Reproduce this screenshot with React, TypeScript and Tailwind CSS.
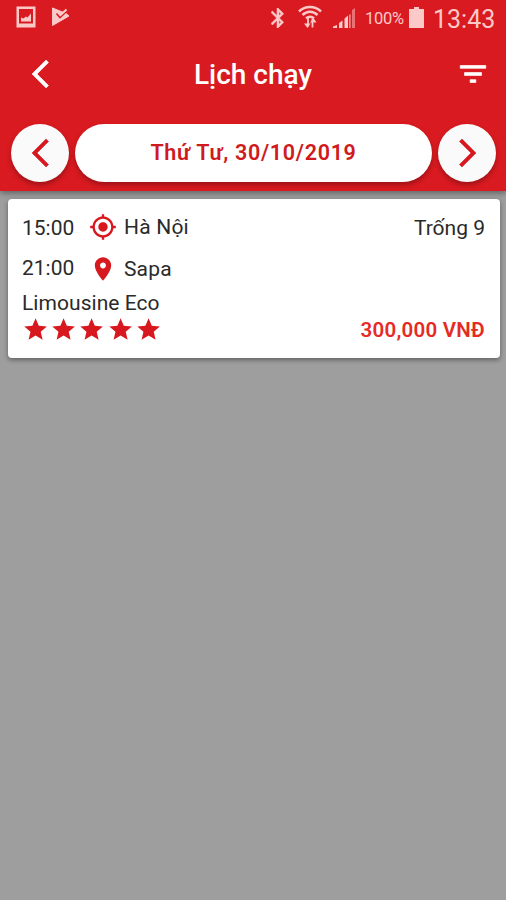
import type { ReactNode } from 'react';

interface IconProps {
  d: string;
  className?: string;
  viewBox?: string;
}

const icons = {
  back: 'M11.67 3.87L9.9 2.1 0 12l9.9 9.9 1.77-1.77L3.54 12z',
  forward: 'M.33 3.87L2.1 2.1 12 12l-9.9 9.9-1.77-1.77L8.46 12z',
  filter: 'M10 18h4v-2h-4v2zM3 6v2h18V6H3zm3 7h12v-2H6v2z',
  origin:
    'M12 8c-2.21 0-4 1.79-4 4s1.79 4 4 4 4-1.79 4-4-1.79-4-4-4zm8.94 3c-.46-4.17-3.77-7.48-7.94-7.94V1h-2v2.06C6.83 3.52 3.52 6.83 3.06 11H1v2h2.06c.46 4.17 3.77 7.48 7.94 7.94V23h2v-2.06c4.17-.46 7.48-3.77 7.94-7.94H23v-2h-2.06zM12 19c-3.87 0-7-3.13-7-7s3.13-7 7-7 7 3.13 7 7-3.13 7-7 7z',
  place:
    'M12 2C8.13 2 5 5.13 5 9c0 5.25 7 13 7 13s7-7.75 7-13c0-3.87-3.13-7-7-7zm0 9.5c-1.38 0-2.5-1.12-2.5-2.5s1.12-2.5 2.5-2.5 2.5 1.12 2.5 2.5-1.12 2.5-2.5 2.5z',
  star: 'M12 17.27L18.18 21l-1.64-7.03L22 9.24l-7.19-.61L12 2 9.19 8.63 2 9.24l5.46 4.73L5.82 21z',
  bluetooth:
    'M17.71 7.71L12 2h-1v7.59L6.41 5 5 6.41 10.59 12 5 17.59 6.41 19 11 14.41V22h1l5.71-5.71-4.3-4.29 4.3-4.29zM13 5.83l1.88 1.88L13 9.59V5.83zm1.88 10.46L13 18.17v-3.76l1.88 1.88z',
};

function Icon({ d, className, viewBox = '0 0 24 24' }: IconProps) {
  return (
    <svg viewBox={viewBox} fill="currentColor" className={className} aria-hidden="true">
      <path d={d} />
    </svg>
  );
}

function Chevron({ d }: { d: string }) {
  return (
    <svg viewBox="0 0 12 24" fill="currentColor" stroke="currentColor" strokeWidth="0.4" className="h-[34px] w-[17px]" aria-hidden="true">
      <path d={d} />
    </svg>
  );
}

function StatusBar() {
  return (
    <div className="flex h-9 items-center text-[#fcc9c9]">
      <svg viewBox="0 0 20 22" className="-mt-0.5 ml-4 h-[22px] w-5 shrink-0">
        <path fill="currentColor" fillRule="evenodd" d="M.5.5h19v21H.5zM3 3v14.500h14V3z" />
        <path fill="currentColor" d="M5 15.500v-4l2.500 1 2.500-2 1.500 1 3.500-4v8z" />
      </svg>
      <svg viewBox="0 0 20 20" className="-mt-0.5 ml-[15px] h-5 w-5 shrink-0">
        <path fill="currentColor" stroke="currentColor" strokeLinejoin="round" d="M1.500 1v17.500L18 9l-3-2.500z" />
        <path fill="currentColor" d="M1 .5L9 5 7 9z" />
        <path fill="none" stroke="#d91a20" strokeWidth="1.600" d="M5.500 6.500l3.500 4 8-7.500" />
        <path fill="none" stroke="currentColor" strokeWidth="2.200" d="M7.500 5.500l2 2.500 6-5.500" />
      </svg>
      <svg viewBox="5 2 13 20" className="ml-[200px] h-5 w-[13px] shrink-0" fill="currentColor" stroke="currentColor" strokeWidth=".5">
        <path d={icons.bluetooth} />
      </svg>
      <svg viewBox="0 0 24 24" className="-mt-1 ml-[14px] h-6 w-6 shrink-0" fill="none" stroke="currentColor">
        <path strokeWidth="2.500" d="M1 7.500c6-6 16-6 22 0M4.500 11c4.500-4.300 10.500-4.300 15 0M8 14.300c2.500-2 5.500-2 8 0" />
        <path strokeWidth="1.800" d="M10 13.500v9M14.500 23.500v-9" />
        <path fill="currentColor" stroke="none" d="M6 19.500h6.500L9.500 24zM12 18.500h6.500l-3-4.500z" />
      </svg>
      <svg viewBox="0 0 24 22" className="ml-[10px] h-[22px] w-6 shrink-0" fill="currentColor">
        <path d="M1 21v-1.500l4-1.500v3zM7 21v-5l3.500-2.500V21zM12.500 21v-9.500l3.500-3V21z" />
        <path opacity=".85" d="M17.200 21V8l1.300-1v14z" />
        <path opacity=".5" d="M20 21V3l3-2v20z" />
      </svg>
      <span className="ml-[9px] mt-0.5 w-[39px] shrink-0 text-[16.500px] leading-none tracking-[-0.3px]">100%</span>
      <svg viewBox="0 0 15 21" className="-mt-0.5 ml-[5px] h-[21px] w-[15px] shrink-0" fill="currentColor">
        <path d="M5 0h5v2h5v19H0V2h5z" />
      </svg>
      <span className="ml-[9px] mt-[3px] text-[25px] leading-none">13:43</span>
    </div>
  );
}

function RoundButton({ label, children }: { label: string; children: ReactNode }) {
  return (
    <button
      aria-label={label}
      className="flex size-[58px] shrink-0 items-center justify-center rounded-full bg-[#fafafa] text-[#d7191f] shadow-[0_3px_5px_rgba(0,0,0,0.28)]"
    >
      {children}
    </button>
  );
}

function Header() {
  return (
    <header className="relative h-[191px] bg-[#d91a20] shadow-[0_2px_6px_rgba(0,0,0,0.4)]">
      <StatusBar />
      <div className="grid h-[76px] grid-cols-[1fr_auto_1fr] items-center pl-8 pr-4 text-white">
        <button aria-label="Quay lại" className="w-[34px]">
          <Chevron d={icons.back} />
        </button>
        <h1 className="-ml-4 mt-0.5 text-[28px] font-medium leading-none">Lịch chạy</h1>
        <button aria-label="Lọc" className="justify-self-end">
          <Icon d={icons.filter} className="size-[34px] stroke-current stroke-[0.5]" />
        </button>
      </div>
      <div className="mt-3 flex gap-[6px] pl-[11px] pr-[10px]">
        <RoundButton label="Ngày trước">
          <Chevron d={icons.back} />
        </RoundButton>
        <button className="flex h-[58px] flex-1 items-center justify-center rounded-full bg-white text-[21.500px] font-semibold tracking-[0.7px] text-[#cf1a20] shadow-[0_3px_5px_rgba(0,0,0,0.28)]">
          Thứ Tư, 30/10/2019
        </button>
        <RoundButton label="Ngày sau">
          <Chevron d={icons.forward} />
        </RoundButton>
      </div>
    </header>
  );
}

function TripCard() {
  return (
    <article className="ml-2 mr-1.5 mt-2 h-[159px] rounded-[4px] bg-white pl-[14px] pr-[15px] pt-[9px] text-[21px] leading-6 text-[#2a2a2a] shadow-[0_2px_5px_rgba(0,0,0,0.4)]">
      <div className="flex h-10 items-center">
        <span className="w-[67px]">15:00</span>
        <Icon d={icons.origin} className="-mt-[3px] size-7 text-[#d7191f]" />
        <span className="-mt-0.5 ml-[7px] tracking-[0.2px]">Hà Nội</span>
        <span className="ml-auto">Trống 9</span>
      </div>
      <div className="flex h-10 items-center">
        <span className="w-[67px]">21:00</span>
        <Icon d={icons.place} className="mt-px size-7 text-[#d7191f]" />
        <span className="ml-[7px] mt-0.5 tracking-[0.15px]">Sapa</span>
      </div>
      <div className="mt-[3px] tracking-[0.05px]">Limousine Eco</div>
      <div className="mt-px flex h-7 items-center">
        <div className="flex gap-[1px] text-[#d7191f]">
          {[1, 2, 3, 4, 5].map((n) => (
            <Icon key={n} d={icons.star} className="-mt-px size-[27.200px]" />
          ))}
        </div>
        <span className="ml-auto text-[20.500px] font-semibold tracking-[0.25px] text-[#e52b23]">300,000 VNĐ</span>
      </div>
    </article>
  );
}

export default function App() {
  return (
    <div className="h-[900px] w-[506px] overflow-hidden bg-[#9e9e9e] font-[Roboto,sans-serif]">
      <Header />
      <TripCard />
    </div>
  );
}
